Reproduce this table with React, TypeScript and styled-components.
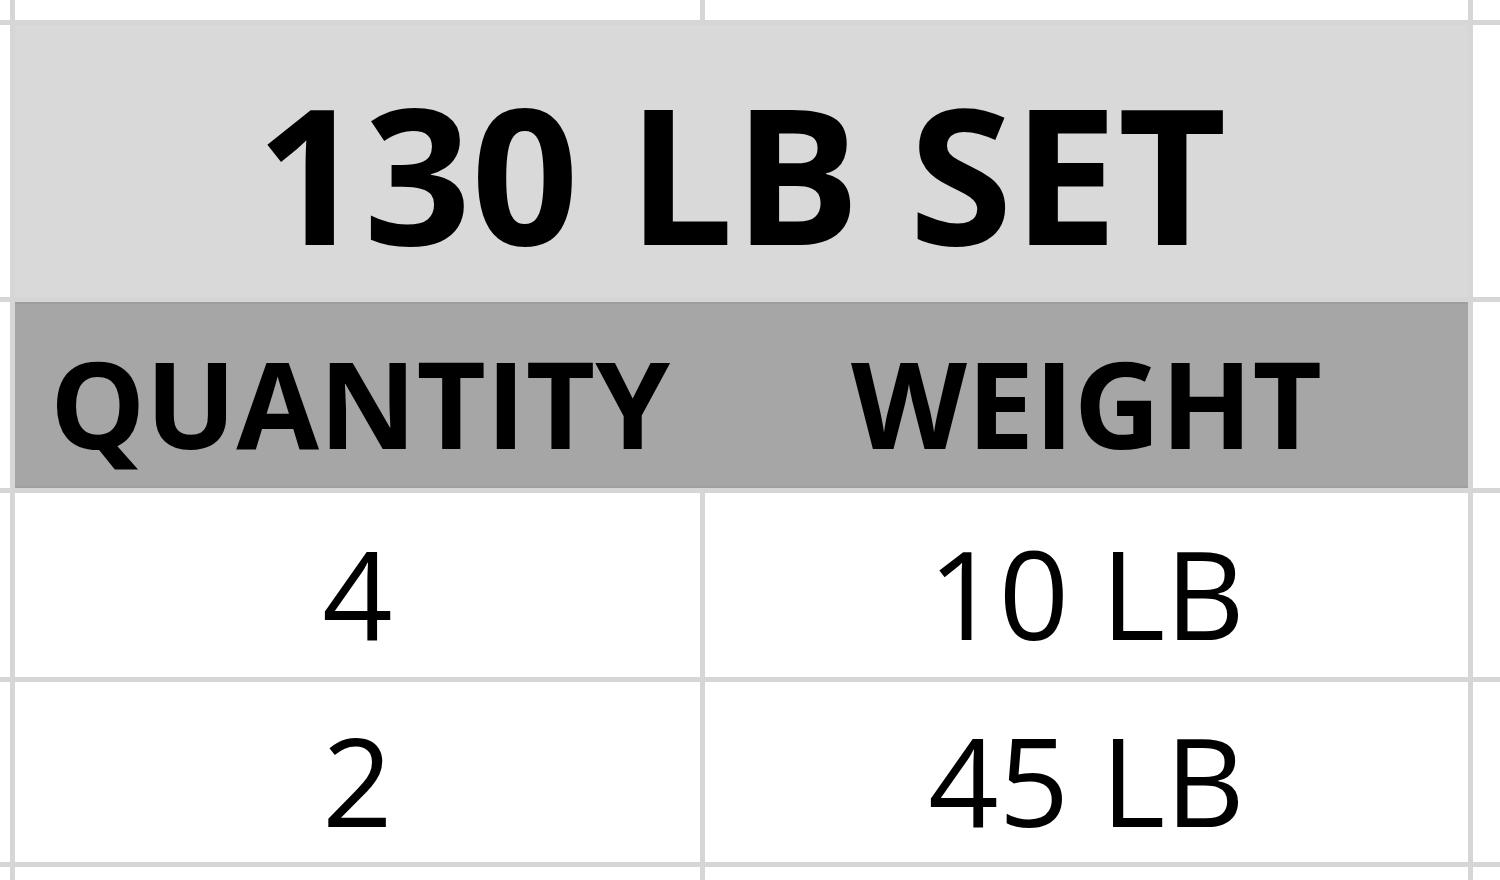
import React from 'react';
import styled, { createGlobalStyle } from 'styled-components';

const GlobalStyle = createGlobalStyle`
  html, body {
    margin: 0;
    padding: 0;
    background: #ffffff;
  }
  body {
    font-family: 'Open Sans', 'Liberation Sans', sans-serif;
    color: #000000;
  }
`;

const Sheet = styled.div`
  width: 1500px;
  height: 880px;
  overflow: hidden;
  display: grid;
  grid-template-columns: 10px 685px 763px 1fr;
  grid-template-rows: 20px 272px 186px 184px 180px 1fr;
  gap: 5px;
  background: #d6d6d6;
`;

const Blank = styled.div`
  background: #ffffff;
`;

const Title = styled.div`
  grid-column: 2 / span 2;
  background: #d9d9d9;
  display: flex;
  align-items: center;
  justify-content: center;
  padding-top: 22px;
  font-size: 188px;
  font-weight: 700;
  line-height: 1;
  white-space: nowrap;
`;

const HeadRow = styled.div`
  grid-column: 2 / span 2;
  background: #a6a6a6;
  box-shadow: inset 0 2px 0 #9e9e9e, inset 0 -2px 0 #9e9e9e;
  display: grid;
  grid-template-columns: 690px 1fr;
`;

const HeadCell = styled.div`
  display: flex;
  align-items: center;
  justify-content: center;
  padding-top: 16px;
  font-size: 120px;
  font-weight: 700;
  line-height: 1;
  white-space: nowrap;
`;

const Cell = styled.div`
  background: #ffffff;
  display: flex;
  align-items: center;
  justify-content: center;
  padding-top: 14px;
  font-size: 123px;
  font-weight: 400;
  line-height: 1;
  white-space: nowrap;
`;

const rows = [
  { qty: '4', weight: '10 LB' },
  { qty: '2', weight: '45 LB' },
];

export default function App() {
  return (
    <>
      <GlobalStyle />
      <Sheet>
        <Blank />
        <Blank />
        <Blank />
        <Blank />

        <Blank />
        <Title>130 LB SET</Title>
        <Blank />

        <Blank />
        <HeadRow>
          <HeadCell>QUANTITY</HeadCell>
          <HeadCell>WEIGHT</HeadCell>
        </HeadRow>
        <Blank />

        {rows.map((r) => (
          <React.Fragment key={r.qty}>
            <Blank />
            <Cell>{r.qty}</Cell>
            <Cell>{r.weight}</Cell>
            <Blank />
          </React.Fragment>
        ))}

        <Blank />
        <Blank />
        <Blank />
        <Blank />
      </Sheet>
    </>
  );
}
